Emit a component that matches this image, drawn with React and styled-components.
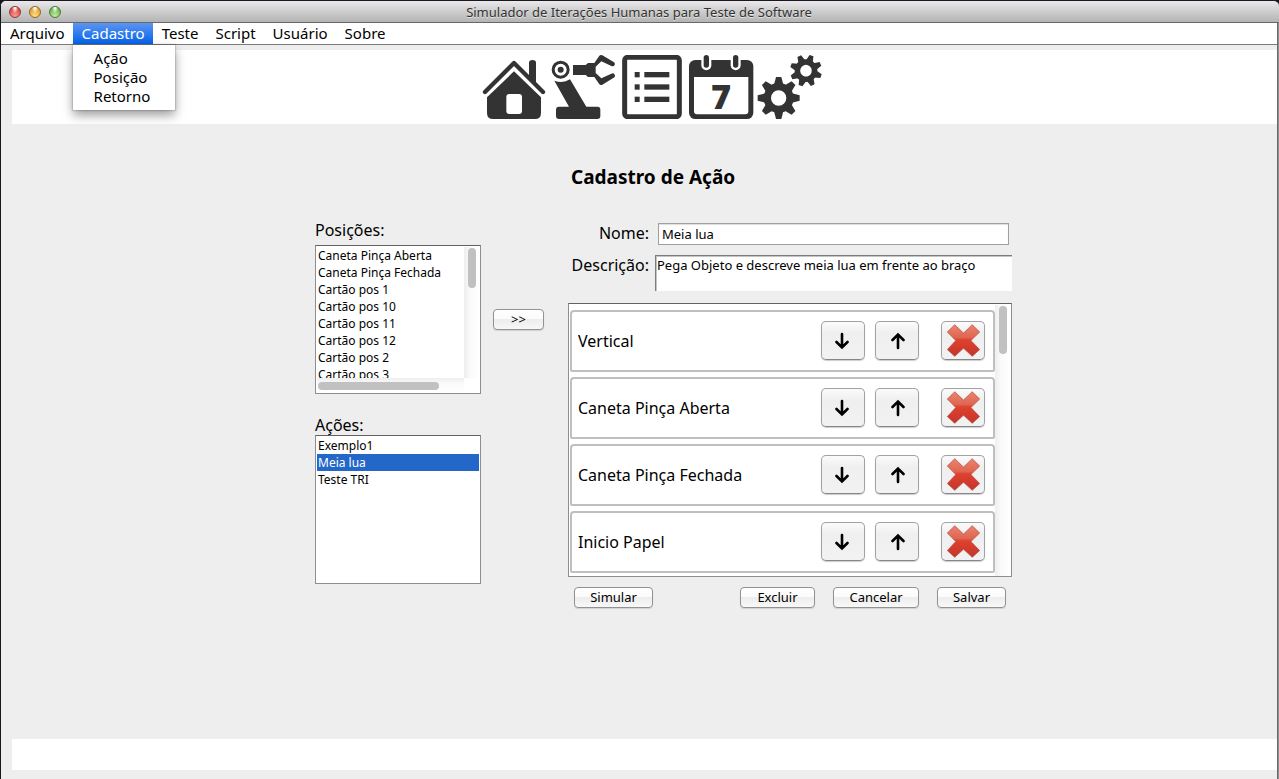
import React from 'react';
import styled, { createGlobalStyle, css } from 'styled-components';

const GlobalStyle = createGlobalStyle`
  *, *::before, *::after { box-sizing: border-box; }
  body {
    margin: 0;
    background: #17171c;
    color: #000;
    font-family: "Noto Sans", "Open Sans", sans-serif;
    font-size: 13px;
  }
  button, input, textarea { font: inherit; color: inherit; margin: 0; }
  ul { list-style: none; margin: 0; padding: 0; }
`;

const Window = styled.div`
  display: flex;
  flex-direction: column;
  min-height: 100vh;
  border: solid #17171c;
  border-width: 1px 0 0 1px;
  box-shadow: inset -1px 0 #8e8e8e, inset -2px 0 #6a6a6a;
  padding-right: 2px;
  background: #eee;
  border-radius: 6px 6px 0 0;
  overflow: hidden;
`;

const TitleBar = styled.header`
  display: grid;
  grid-template-columns: 1fr auto 1fr;
  align-items: center;
  height: 22px;
  margin-right: -2px;
  padding: 0 10px 0 8px;
  border-bottom: 1px solid #686868;
  background: linear-gradient(#ece8ec, #d2d2d2 40%, #b4b4b4);
`;

const Lights = styled.div`
  display: flex;
  gap: 8px;
`;

const Light = styled.button`
  width: 12px;
  height: 12px;
  padding: 0;
  border: 1px solid ${(p) => p.$edge};
  border-radius: 50%;
  background: radial-gradient(ellipse at 50% 0, #fff 0 10%, transparent 45%),
    radial-gradient(circle at 50% 90%, ${(p) => p.$glow}, ${(p) => p.$fill} 80%);
`;

const WindowTitle = styled.h1`
  margin: 0;
  font-size: 13px;
  font-weight: 400;
  line-height: 20px;
  color: #333;
  text-shadow: 0 1px #e4e4e4;
`;

const MenuBar = styled.nav`
  display: flex;
  height: 22px;
  background: #fff;
  border-bottom: 1px solid #7c7c7c;
`;

const MenuSlot = styled.div`
  position: relative;
  display: flex;
`;

const MenuButton = styled.button`
  padding: 0 8px 0 9px;
  border: 0;
  font-size: 15px;
  line-height: 21px;
  background: none;
  ${(p) => p.$open && css`
    color: #fff;
    background: linear-gradient(#5c94f2, #0463ea);
  `}
`;

const Dropdown = styled.ul`
  position: absolute;
  z-index: 2;
  top: 22px;
  left: 0;
  width: 102px;
  && { padding: 4px 0; }
  background: #fff;
  box-shadow: 0 0 1px 1px rgba(0, 0, 0, 0.12), 0 5px 10px rgba(0, 0, 0, 0.4);
`;

const DropdownItem = styled.button`
  display: block;
  width: 100%;
  padding: 0 21px;
  border: 0;
  background: none;
  text-align: left;
  font-size: 15px;
  line-height: 19px;
`;

const Toolbar = styled.div`
  display: flex;
  justify-content: center;
  align-items: center;
  height: 74px;
  margin: 5px 0 0 11px;
  padding-left: 17px;
  background: #fff;
`;

const ToolButton = styled.button`
  display: flex;
  padding: 0;
  border: 0;
  background: none;
  svg { display: block; height: 64px; fill: #333; }
`;

const Workspace = styled.main`
  display: flex;
  justify-content: center;
  align-items: flex-start;
  padding: 40px 0 40px 49px;
`;

const SideColumn = styled.section`
  display: flex;
  flex-direction: column;
  width: 166px;
  padding-top: 56px;
`;

const ListLabel = styled.h3`
  margin: 0;
  padding-bottom: ${(p) => p.$after || 0}px;
  font-size: 16px;
  font-weight: 400;
  line-height: 20px;
`;

const ListFrame = styled.div`
  display: grid;
  grid-template: minmax(0, 1fr) auto / minmax(0, 1fr) auto;
  height: ${(p) => p.$height}px;
  margin-bottom: ${(p) => p.$after || 0}px;
  padding: 1px;
  border: 1px solid #8e8e8e;
  border-top-color: #626262;
  background: #fff;
`;

const PlainList = styled.ul`
  overflow: hidden;
`;

const Option = styled.li`
  padding: 0 1px;
  font-size: 12px;
  line-height: 17px;
  white-space: nowrap;
  ${(p) => p['aria-selected'] && css`
    color: #fff;
    background: #2367c9;
  `}
`;

const Track = styled.div`
  padding: ${(p) => (p.$across ? '4px 1px 2px' : '1px 3px 1px 4px')};
  background: linear-gradient(${(p) => (p.$across ? 'to bottom' : 'to right')}, #eee, #fafafa 40%, #fff);
`;

const Thumb = styled.div`
  width: ${(p) => p.$w}px;
  height: ${(p) => p.$h}px;
  border-radius: 4px;
  background: #c1c1c1;
`;

const PushButton = styled.button`
  height: 21px;
  padding: 0;
  width: ${(p) => p.$width}px;
  border: 1px solid #929292;
  border-radius: 4px;
  box-shadow: 0 1px 1px rgba(0, 0, 0, 0.12);
  background: linear-gradient(#fff, #fbfbfb 45%, #ededed 50%, #f8f8f8);
  font-size: 13px;
  line-height: 19px;
  text-align: center;
`;

const AddSlot = styled.div`
  padding: 145px 24px 0 12px;
`;

const Editor = styled.form`
  display: flex;
  flex-direction: column;
  width: 444px;
`;

const Heading = styled.h2`
  margin: 0 0 32px 3px;
  font-size: 19px;
  font-weight: 700;
  line-height: 27px;
`;

const Field = styled.div`
  display: grid;
  grid-template-columns: 81px 1fr;
  column-gap: ${(p) => p.$gap}px;
  margin: 0 ${(p) => p.$inset || 0}px ${(p) => p.$after}px 0;
`;

const FieldLabel = styled.label`
  font-size: 16px;
  line-height: 20px;
  text-align: right;
  white-space: nowrap;
`;

const NameInput = styled.input`
  min-width: 0;
  height: 22px;
  padding: 0 3px;
  border: 1px solid #a0a0a0;
  border-radius: 0;
  outline: 0;
  background: #fff;
  box-shadow: inset 0 1px 1px #ddd;
`;

const DescriptionInput = styled.textarea`
  height: 36px;
  padding: 1px;
  border: solid #7c7c7c;
  border-width: 1px 0 0 1px;
  border-radius: 0;
  outline: 0;
  resize: none;
  overflow: hidden;
  background: #fff;
  box-shadow: inset 1px 1px #c4c4c4;
  line-height: 17px;
`;

const StepPane = styled.div`
  display: grid;
  grid-template-columns: minmax(0, 1fr) auto;
  height: 274px;
  padding: 1px 1px 0;
  border: 1px solid #8e8e8e;
  border-top-color: #626262;
  background: #fff;
`;

const Steps = styled.ul`
  display: flex;
  flex-direction: column;
  gap: 5px;
  overflow: hidden;
  && { padding-top: 5px; }
`;

const Step = styled.li`
  display: flex;
  align-items: center;
  flex: none;
  height: 62px;
  padding: 0 8px 1px 6px;
  border: 2px solid #bfbfbf;
  border-radius: 4px 4px 2px 2px;
`;

const StepName = styled.span`
  flex: 1;
  font-size: 16px;
`;

const StepButton = styled.button`
  display: flex;
  align-items: center;
  justify-content: center;
  width: 44px;
  height: 39px;
  margin-left: ${(p) => (p.$apart ? 22 : 10)}px;
  padding: 0;
  border: 1px solid #a2a2a2;
  border-bottom-color: #868686;
  border-radius: 5px;
  background: linear-gradient(#fbfbfb, #efefef 30%, #f2f2f2);
  box-shadow: 0 1px 1px rgba(0, 0, 0, 0.2);
`;

const Actions = styled.div`
  display: flex;
  justify-content: space-between;
  margin-top: 10px;
  padding: 0 6px;
`;

const ActionGroup = styled.div`
  display: flex;
  gap: 18px;
`;

const StatusBar = styled.footer`
  height: 31px;
  margin: auto 0 9px 11px;
  background: #fff;
`;

const HomeIcon = () => (
  <svg viewBox="6 15 198 192" width="66" aria-hidden="true">
    <path d="M147 78V38q0-8 10.500-8t10.500 8v62z" />
    <path d="M15 126 102 39l87 87" fill="none" stroke="#333" strokeWidth="13" strokeLinecap="round" strokeLinejoin="round" />
    <path d="M102 64 183 142v47q0 18-18 18H39q-18 0-18-18v-47z" />
    <rect x="79" y="132" width="47" height="60" rx="9" fill="#fff" />
  </svg>
);

const RobotIcon = () => (
  <svg viewBox="204 15 210 192" width="70" aria-hidden="true">
    <circle cx="242" cy="59" r="22.500" fill="none" stroke="#333" strokeWidth="9" />
    <circle cx="242" cy="59" r="9" />
    <path d="M223 92q26 9 47-4l49 82h33q9 0 9 9v19q0 9-9 9H237q-9 0-9-9v-19q0-9 9-9h30z" />
    <path d="M279 45h38l7-6h19l14-20q4-6 10-3l34 20q5 3 3 9-3 6-10 3l-30-14-17 16v19l17 16 30-14q7-3 10 3t-3 9l-34 21q-6 3-10-3l-14-20h-19l-7-6h-38z" />
  </svg>
);

const ListIcon = () => (
  <svg viewBox="534 165 204 192" width="68" aria-hidden="true">
    <rect x="554" y="172" width="164" height="178" rx="9" fill="none" stroke="#333" strokeWidth="15" />
    {[216, 253, 290].map((y) => (
      <React.Fragment key={y}>
        <rect x="584" y={y} width="15" height="16" />
        <rect x="613" y={y} width="75" height="16" />
      </React.Fragment>
    ))}
  </svg>
);

const CalendarIcon = () => (
  <svg viewBox="78 15 210 192" width="70" aria-hidden="true">
    <rect x="87" y="30" width="193" height="177" rx="19" />
    <path d="M102 81h163v103q0 9-9 9H111q-9 0-9-9z" fill="#fff" />
    {[131, 219].map((x) => (
      <React.Fragment key={x}>
        <rect x={x - 7} y="4" width="30" height="57" rx="15" fill="#fff" />
        <rect x={x} y="15" width="16" height="38" rx="8" />
      </React.Fragment>
    ))}
    <text x="183" y="177" textAnchor="middle" fontFamily="Open Sans, sans-serif" fontWeight="800" fontSize="103">7</text>
  </svg>
);

const Gear = ({ cx, cy, size, turn }) => (
  <g transform={`translate(${cx} ${cy}) rotate(${turn}) scale(${size})`}>
    <circle r="34" fill="none" stroke="#333" strokeWidth="22" />
    {[0, 45, 90, 135, 180, 225, 270, 315].map((a) => (
      <path key={a} transform={`rotate(${a})`} d="M-14-40-8-63H8L14-40z" />
    ))}
  </g>
);

const GearsIcon = () => (
  <svg viewBox="288 15 204 192" width="68" aria-hidden="true">
    <Gear cx={356} cy={144} size={1} turn={0} />
    <Gear cx={438} cy={62} size={0.76} turn={20} />
  </svg>
);

const ArrowIcon = ({ up }) => (
  <svg viewBox={up ? '-9 -9 16 18' : '-7 -9 16 18'} width="16" height="18" aria-hidden="true">
    <path
      d="M0-7V6M-5.500 1 0 6.500 5.500 1"
      transform={up ? 'scale(1 -1)' : undefined}
      fill="none"
      stroke="#000"
      strokeWidth="2.600"
      strokeLinecap="round"
    />
  </svg>
);

const RemoveIcon = () => (
  <svg viewBox="440 71 98 98" width="33" height="33" aria-hidden="true">
    <defs>
      <linearGradient id="remove-fill" x1="0" y1="0" x2="0" y2="1">
        <stop offset="0" stopColor="#e98570" />
        <stop offset="0.400" stopColor="#e06652" />
        <stop offset="0.480" stopColor="#db4330" />
        <stop offset="0.650" stopColor="#d93c2c" />
        <stop offset="1" stopColor="#bd372f" />
      </linearGradient>
    </defs>
    <path
      d="M463 73 489 98l26-25 22 22-26 25 26 27-22 20-26-24-26 24-22-20 25-27-25-25z"
      fill="url(#remove-fill)"
      stroke="#b5473c"
      strokeWidth="2"
    />
  </svg>
);

const menus = ['Arquivo', 'Cadastro', 'Teste', 'Script', 'Usuário', 'Sobre'];
const submenu = ['Ação', 'Posição', 'Retorno'];
const positions = [
  'Caneta Pinça Aberta', 'Caneta Pinça Fechada', 'Cartão pos 1', 'Cartão pos 10',
  'Cartão pos 11', 'Cartão pos 12', 'Cartão pos 2', 'Cartão pos 3',
];
const actions = ['Exemplo1', 'Meia lua', 'Teste TRI'];
const steps = ['Vertical', 'Caneta Pinça Aberta', 'Caneta Pinça Fechada', 'Inicio Papel'];
const tools = [
  ['Início', HomeIcon], ['Robô', RobotIcon], ['Lista', ListIcon],
  ['Agenda', CalendarIcon], ['Configurações', GearsIcon],
];

export default function App() {
  return (
    <>
      <GlobalStyle />
      <Window>
        <TitleBar>
          <Lights>
            <Light aria-label="Fechar" $edge="#8f3835" $fill="#d8403f" $glow="#ff9a90" />
            <Light aria-label="Minimizar" $edge="#94662a" $fill="#e39a2c" $glow="#ffe27c" />
            <Light aria-label="Ampliar" $edge="#4a7a38" $fill="#62ad48" $glow="#c4f0a0" />
          </Lights>
          <WindowTitle>Simulador de Iterações Humanas para Teste de Software</WindowTitle>
        </TitleBar>
        <MenuBar>
          {menus.map((name) => (
            <MenuSlot key={name}>
              <MenuButton $open={name === 'Cadastro'}>{name}</MenuButton>
              {name === 'Cadastro' && (
                <Dropdown>
                  {submenu.map((item) => (
                    <li key={item}><DropdownItem>{item}</DropdownItem></li>
                  ))}
                </Dropdown>
              )}
            </MenuSlot>
          ))}
        </MenuBar>
        <Toolbar>
          {tools.map(([label, Icon]) => (
            <ToolButton key={label} aria-label={label}><Icon /></ToolButton>
          ))}
        </Toolbar>
        <Workspace>
          <SideColumn>
            <ListLabel id="positions" $after={5}>Posições:</ListLabel>
            <ListFrame $height={149} $after={21}>
              <PlainList role="listbox" aria-labelledby="positions">
                {positions.map((p) => (
                  <Option key={p} role="option" aria-selected={false}>{p}</Option>
                ))}
              </PlainList>
              <Track><Thumb $w={8} $h={40} /></Track>
              <Track $across><Thumb $w={121} $h={8} /></Track>
            </ListFrame>
            <ListLabel id="actions">Ações:</ListLabel>
            <ListFrame $height={149}>
              <PlainList role="listbox" aria-labelledby="actions">
                {actions.map((a) => (
                  <Option key={a} role="option" aria-selected={a === 'Meia lua'}>{a}</Option>
                ))}
              </PlainList>
            </ListFrame>
          </SideColumn>
          <AddSlot>
            <PushButton type="button" $width={51}>&gt;&gt;</PushButton>
          </AddSlot>
          <Editor>
            <Heading>Cadastro de Ação</Heading>
            <Field $gap={9} $inset={3} $after={10}>
              <FieldLabel htmlFor="name">Nome:</FieldLabel>
              <NameInput id="name" defaultValue="Meia lua" />
            </Field>
            <Field $gap={6} $after={12}>
              <FieldLabel htmlFor="description">Descrição:</FieldLabel>
              <DescriptionInput id="description" defaultValue="Pega Objeto e descreve meia lua em frente ao braço" />
            </Field>
            <StepPane>
              <Steps>
                {steps.map((s) => (
                  <Step key={s}>
                    <StepName>{s}</StepName>
                    <StepButton type="button" aria-label="Descer"><ArrowIcon /></StepButton>
                    <StepButton type="button" aria-label="Subir"><ArrowIcon up /></StepButton>
                    <StepButton type="button" aria-label="Remover" $apart><RemoveIcon /></StepButton>
                  </Step>
                ))}
              </Steps>
              <Track><Thumb $w={8} $h={48} /></Track>
            </StepPane>
            <Actions>
              <PushButton type="button" $width={79}>Simular</PushButton>
              <ActionGroup>
                <PushButton type="button" $width={75}>Excluir</PushButton>
                <PushButton type="button" $width={86}>Cancelar</PushButton>
                <PushButton type="button" $width={69}>Salvar</PushButton>
              </ActionGroup>
            </Actions>
          </Editor>
        </Workspace>
        <StatusBar />
      </Window>
    </>
  );
}
